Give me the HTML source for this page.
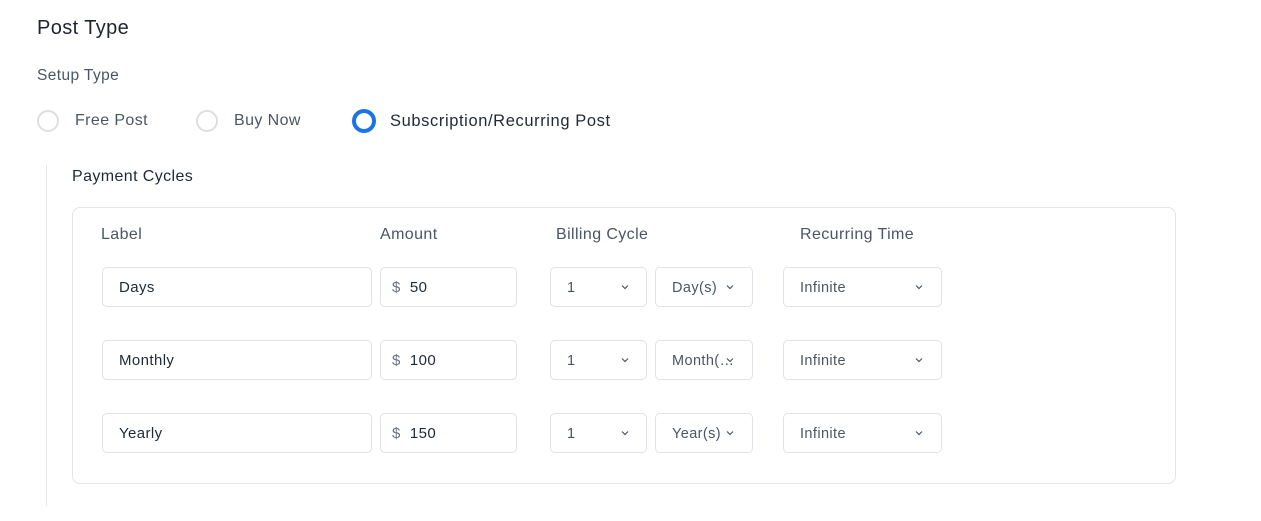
<!DOCTYPE html>
<html><head><style>
body{margin:0;width:1261px;height:521px;background:#fff;font-family:"Liberation Sans",sans-serif;position:relative;overflow:hidden;color:#1f2937}
.a{position:absolute;white-space:nowrap;letter-spacing:0.4px}
.r{position:absolute;width:22px;height:22px;border-radius:50%;border:2px solid #dcdfe3;box-sizing:border-box}
.b{position:absolute;border:1px solid #dfe2e6;border-radius:5px;box-sizing:border-box;height:40px;font-size:15px;line-height:40px;padding-left:16px;color:#1f2937;letter-spacing:0.4px}
.s{color:#4b5563;font-size:14.5px;line-height:41px}
.c{position:absolute;top:15px;width:8px;height:8px}
</style></head><body>
<div class="a" style="left:37px;top:17px;font-size:20px;color:#1f2330">Post Type</div>
<div class="a" style="left:37px;top:67px;font-size:15.5px;color:#4b5563">Setup Type</div>
<div class="r" style="left:37px;top:110px"></div>
<div class="a" style="left:75px;top:112px;font-size:16px;color:#4b5563">Free Post</div>
<div class="r" style="left:196px;top:110px"></div>
<div class="a" style="left:234px;top:112px;font-size:16px;color:#4b5563">Buy Now</div>
<div class="r" style="left:352px;top:109px;width:24px;height:24px;border:4px solid #1a73e8"></div>
<div class="a" style="left:390px;top:112px;font-size:16.5px;color:#1f2937;letter-spacing:0.6px">Subscription/Recurring Post</div>
<div class="a" style="left:46px;top:165px;width:1px;height:341px;background:#e5e7eb"></div>
<div class="a" style="left:72px;top:168px;font-size:16px;color:#1f2937">Payment Cycles</div>
<div class="a" style="left:72px;top:207px;width:1104px;height:277px;border:1px solid #e3e5e8;border-radius:8px;box-sizing:border-box"></div>
<div class="a" style="left:101px;top:226px;font-size:16px;color:#4b5563">Label</div>
<div class="a" style="left:380px;top:226px;font-size:16px;color:#4b5563">Amount</div>
<div class="a" style="left:556px;top:226px;font-size:16px;color:#4b5563">Billing Cycle</div>
<div class="a" style="left:800px;top:226px;font-size:16px;color:#4b5563">Recurring Time</div>
<svg width="0" height="0" style="position:absolute"><defs><symbol id="v" viewBox="0 0 8 8"><path d="M1 2.5L4 5.5L7 2.5" fill="none" stroke="#4b5563" stroke-width="1.2"/></symbol></defs></svg>
<div class="b" style="left:102px;top:267px;width:270px">Days</div>
<div class="b" style="left:380px;top:267px;width:137px;padding-left:11px"><span style="color:#6b7280">$</span>&nbsp;&nbsp;50</div>
<div class="b s" style="left:550px;top:267px;width:97px">1<svg class="c" style="left:70px"><use href="#v"/></svg></div>
<div class="b s" style="left:655px;top:267px;width:98px">Day(s)<svg class="c" style="left:70px"><use href="#v"/></svg></div>
<div class="b s" style="left:783px;top:267px;width:159px">Infinite<svg class="c" style="left:131px"><use href="#v"/></svg></div>

<div class="b" style="left:102px;top:340px;width:270px">Monthly</div>
<div class="b" style="left:380px;top:340px;width:137px;padding-left:11px"><span style="color:#6b7280">$</span>&nbsp;&nbsp;100</div>
<div class="b s" style="left:550px;top:340px;width:97px">1<svg class="c" style="left:70px"><use href="#v"/></svg></div>
<div class="b s" style="left:655px;top:340px;width:98px">Month(…<svg class="c" style="left:70px"><use href="#v"/></svg></div>
<div class="b s" style="left:783px;top:340px;width:159px">Infinite<svg class="c" style="left:131px"><use href="#v"/></svg></div>

<div class="b" style="left:102px;top:413px;width:270px">Yearly</div>
<div class="b" style="left:380px;top:413px;width:137px;padding-left:11px"><span style="color:#6b7280">$</span>&nbsp;&nbsp;150</div>
<div class="b s" style="left:550px;top:413px;width:97px">1<svg class="c" style="left:70px"><use href="#v"/></svg></div>
<div class="b s" style="left:655px;top:413px;width:98px">Year(s)<svg class="c" style="left:70px"><use href="#v"/></svg></div>
<div class="b s" style="left:783px;top:413px;width:159px">Infinite<svg class="c" style="left:131px"><use href="#v"/></svg></div>
</body></html>
